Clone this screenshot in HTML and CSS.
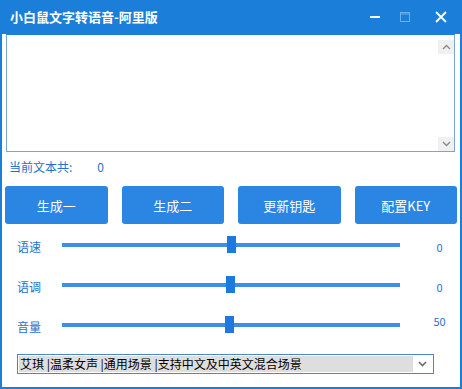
FILE: index.html
```html
<!DOCTYPE html>
<html lang="zh">
<head>
<meta charset="utf-8">
<link rel="stylesheet" href="styles.css">
</head>
<body>
<div class="window">
  <div class="titlebar">
    <div class="title">小白鼠文字转语音-阿里版</div>
    <div class="controls">
      <div class="ctl ctl-min"><svg width="10" height="10" viewBox="0 0 10 10"><line x1="0" y1="5" x2="10" y2="5" stroke="#fff" stroke-width="2"/></svg></div>
      <div class="ctl ctl-max"><svg width="10" height="10" viewBox="0 0 10 10"><rect x="0.5" y="0.5" width="9" height="9" fill="none" stroke="#6fb0f0" stroke-width="1"/><line x1="0" y1="2" x2="10" y2="2" stroke="#6fb0f0" stroke-width="1"/></svg></div>
      <div class="ctl ctl-close"><svg width="12" height="12" viewBox="0 0 12 12"><path d="M1 1L11 11M11 1L1 11" stroke="#fff" stroke-width="1.8" fill="none"/></svg></div>
    </div>
  </div>
  <div class="body">
    <div class="textbox">
      <div class="textarea"></div>
      <div class="scrollbar">
        <div class="arrow"><svg width="9" height="6" viewBox="0 0 9 6"><path d="M1 5L4.5 1.5L8 5" stroke="#8a8a8a" stroke-width="1.4" fill="none"/></svg></div>
        <div class="arrow"><svg width="9" height="6" viewBox="0 0 9 6"><path d="M1 1L4.5 4.5L8 1" stroke="#8a8a8a" stroke-width="1.4" fill="none"/></svg></div>
      </div>
    </div>
    <div class="counter">
      <span class="counter-label">当前文本共:</span>
      <span class="counter-value">0</span>
    </div>
    <div class="buttons">
      <div class="btn">生成一</div>
      <div class="btn">生成二</div>
      <div class="btn">更新钥匙</div>
      <div class="btn">配置KEY</div>
    </div>
    <div class="sliders">
      <div class="slider-row">
        <div class="slider-label">语速</div>
        <div class="track"><div class="thumb" style="left:165px"></div></div>
        <div class="slider-value val-low">0</div>
      </div>
      <div class="slider-row">
        <div class="slider-label">语调</div>
        <div class="track"><div class="thumb" style="left:164px"></div></div>
        <div class="slider-value val-low">0</div>
      </div>
      <div class="slider-row">
        <div class="slider-label">音量</div>
        <div class="track"><div class="thumb" style="left:163px"></div></div>
        <div class="slider-value val-high">50</div>
      </div>
    </div>
    <div class="select">
      <div class="select-text">艾琪 |温柔女声 |通用场景 |支持中文及中英文混合场景</div>
      <div class="select-arrow"><svg width="9" height="6" viewBox="0 0 9 6"><path d="M1 1L4.5 4.5L8 1" stroke="#6a6a6a" stroke-width="1.6" fill="none"/></svg></div>
    </div>
  </div>
</div>
</body>
</html>
```
FILE: styles.css
```css
* { box-sizing: border-box; }
html, body { margin: 0; padding: 0; background: #fff; }
body {
  font-family: "Noto Sans CJK SC", "Noto Sans", sans-serif;
  width: 462px;
  height: 389px;
  overflow: hidden;
}
.window {
  width: 462px;
  height: 389px;
  display: flex;
  flex-direction: column;
}
.titlebar {
  height: 34px;
  background: #1b7fd9;
  display: flex;
  justify-content: space-between;
  align-items: center;
  padding-left: 10px;
  flex: none;
}
.title {
  color: #fff;
  font-weight: bold;
  font-size: 13px;
  line-height: 16px;
}
.controls {
  display: flex;
  height: 34px;
}
.ctl {
  display: flex;
  align-items: center;
  justify-content: center;
  height: 34px;
}
.ctl svg { display: block; }
.ctl-min { width: 30px; }
.ctl-max { width: 30px; }
.ctl-close { width: 42px; }
.body {
  flex: 1;
  border-left: 2px solid #1b7fd9;
  border-right: 2px solid #1b7fd9;
  border-bottom: 2px solid #1b7fd9;
  display: flex;
  flex-direction: column;
}
.textbox {
  height: 118px;
  margin: 0 5px 0 4px;
  border: 1px solid #7aa5d6;
  border-top-color: #1b7fd9;
  display: flex;
  flex: none;
}
.textarea { flex: 1; }
.scrollbar {
  width: 16px;
  display: flex;
  flex-direction: column;
  justify-content: space-between;
  padding-top: 5px;
}
.arrow {
  height: 14px;
  background: #f0f0f0;
  display: flex;
  align-items: center;
  justify-content: center;
}
.arrow svg { display: block; }
.counter {
  height: 28px;
  display: flex;
  align-items: center;
  padding-left: 7px;
  font-size: 12px;
  color: #1f73cc;
  flex: none;
}
.counter-value { margin-left: 25px; }
.buttons {
  margin-top: 6px;
  padding-left: 3px;
  display: flex;
  gap: 14px;
  flex: none;
}
.btn {
  width: 102.5px;
  height: 38px;
  background: #2a85e3;
  border-radius: 3px;
  color: #fff;
  font-size: 13px;
  display: flex;
  align-items: center;
  justify-content: center;
}
.sliders {
  margin-top: 1px;
  display: flex;
  flex-direction: column;
  flex: none;
}
.slider-row {
  height: 40px;
  display: flex;
  align-items: center;
  padding-left: 15px;
}
.slider-label {
  width: 45px;
  font-size: 12px;
  color: #1f73cc;
  margin-top: 2px;
}
.track {
  width: 338px;
  height: 4px;
  background: #3c8fe8;
  position: relative;
}
.thumb {
  position: absolute;
  top: -7px;
  width: 9px;
  height: 17px;
  background: #1f78db;
}
.slider-value {
  width: 31px;
  margin-left: 24px;
  text-align: center;
  font-size: 11px;
  color: #1f73cc;
}
.val-low { margin-top: 4px; }
.val-high { margin-top: -9px; }
.select {
  margin: 9px 0 0 15px;
  width: 417px;
  height: 20px;
  border: 1px solid #4a86c8;
  padding: 1px;
  display: flex;
  flex: none;
}
.select-text {
  width: 394px;
  background: #dedede;
  color: #000;
  font-size: 12px;
  line-height: 16px;
  padding-left: 1px;
  white-space: nowrap;
  overflow: hidden;
}
.select-arrow {
  flex: 1;
  display: flex;
  align-items: center;
  justify-content: center;
}
.select-arrow svg { display: block; }
```
